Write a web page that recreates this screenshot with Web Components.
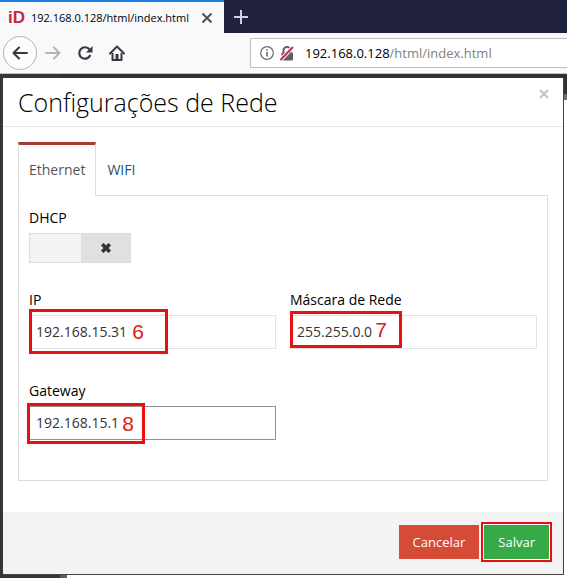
<!DOCTYPE html>
<html lang="pt-BR">
<head>
  <meta charset="utf-8">
  <meta name="viewport" content="width=device-width, initial-scale=1">
  <title>192.168.0.128/html/index.html</title>
  <style>
    body {
      margin: 0;
      min-height: 100vh;
      display: flex;
      flex-direction: column;
      background: #ffffff;
      color: #000000;
      font: 14px/20px "Open Sans", "Noto Sans", sans-serif;
    }
    app-page {
      flex: 1;
    }
  </style>
</head>
<body>
  <browser-bar></browser-bar>
  <app-page>
    <modal-dialog heading="Configurações de Rede">
      <network-form></network-form>
      <action-button slot="footer" label="Cancelar" style="--button-background: #d64a38"></action-button>
      <action-button slot="footer" label="Salvar" marked style="--button-background: #35aa47"></action-button>
    </modal-dialog>
  </app-page>

  <script>
    class BrowserBar extends HTMLElement {
      constructor() {
        super();
        this.attachShadow({ mode: 'open' });
      }

      connectedCallback() {
        this.render();
      }

      render() {
        this.shadowRoot.innerHTML = `
            <style>
              :host {
                display: block;
                background: #f9f9fb;
                border-bottom: 1px solid #c4c4c8;
                overflow: hidden;
              }
              button {
                border: 0;
                padding: 0;
                background: none;
                display: grid;
                place-items: center;
              }
              svg {
                display: block;
                flex-shrink: 0;
              }
              .tabs {
                display: flex;
                height: 33px;
                background: #20213f;
              }
              .tab {
                box-sizing: border-box;
                width: 224px;
                display: flex;
                align-items: center;
                gap: 6px;
                padding: 0 11px 0 8px;
                border-top: 2px solid #1b7fe0;
                background: #f9f9fb;
                font-size: 11px;
              }
              .tab .logo {
                color: #c22a42;
                font: 700 17px/20px "Liberation Sans", Arial, sans-serif;
              }
              .tab .title {
                flex: 1;
                white-space: nowrap;
              }
              .new {
                width: 34px;
              }
              .toolbar {
                display: flex;
                align-items: center;
                height: 40px;
                padding-left: 3px;
              }
              .nav {
                display: flex;
                align-items: center;
                width: 247px;
                gap: 8px;
              }
              .nav button {
                width: 24px;
                height: 34px;
              }
              .nav .back {
                box-sizing: border-box;
                width: 34px;
                margin-right: -4px;
                border: 1px solid #b4b4b8;
                border-radius: 50%;
                background: #fcfcfd;
              }
              .address {
                box-sizing: border-box;
                flex: 1;
                display: flex;
                align-items: center;
                gap: 6px;
                height: 30px;
                padding-left: 9px;
                border: 1px solid #bebec2;
                border-right: 0;
                border-radius: 2px 0 0 2px;
                background: #ffffff;
              }
              .url {
                margin-left: 5px;
                color: #808080;
                font-size: 13px;
              }
              .url b {
                color: #000000;
                font-weight: 400;
              }
            </style>
            <div class="tabs">
              <div class="tab">
                <span class="logo">iD</span>
                <span class="title">192.168.0.128/html/index.html</span>
                <button type="button" aria-label="Fechar aba">
                  <svg width="12" height="12" viewBox="0 0 12 12" stroke="#4b4b50" stroke-width="1.800"><path d="M1.500 1.500l9 9M10.500 1.500l-9 9"/></svg>
                </button>
              </div>
              <button class="new" type="button" aria-label="Nova aba">
                <svg width="14" height="14" viewBox="0 0 14 14" stroke="#d2d2dc" stroke-width="2"><path d="M7 0v14M0 7h14"/></svg>
              </button>
            </div>
            <div class="toolbar">
              <div class="nav">
                <button class="back" type="button" aria-label="Voltar">
                  <svg width="16" height="14" viewBox="0 0 16 14" fill="none" stroke="#38383d" stroke-width="2" stroke-linecap="round" stroke-linejoin="round"><path d="M15 7H1.500M7 1.500L1.500 7 7 12.500"/></svg>
                </button>
                <button type="button" aria-label="Avançar">
                  <svg width="16" height="14" viewBox="0 0 16 14" fill="none" stroke="#b5b5b9" stroke-width="2" stroke-linecap="round" stroke-linejoin="round"><path d="M1 7h13.500M9 1.500L14.500 7 9 12.500"/></svg>
                </button>
                <button type="button" aria-label="Recarregar">
                  <svg width="16" height="16" viewBox="0 0 16 16" fill="none" stroke="#38383d" stroke-width="2.200"><path d="M12.500 4.500A5.700 5.700 0 1 0 13.300 10"/><path d="M15.500 1v6.500H9z" fill="#38383d" stroke="none"/></svg>
                </button>
                <button type="button" aria-label="Início">
                  <svg width="16" height="16" viewBox="0 0 16 16" fill="none" stroke="#38383d" stroke-width="2" stroke-linejoin="round"><path d="M1 8.500L8 1.500l7 7" stroke-linecap="round"/><path d="M3.500 8v7h9V8"/><path d="M8 9v6" stroke-width="3"/></svg>
                </button>
              </div>
              <div class="address">
                <svg width="14" height="14" viewBox="0 0 14 14" fill="none" stroke="#6a6a6f" aria-hidden="true"><circle cx="7" cy="7" r="6.300" stroke-width="1.200"/><path d="M7 6v4.500M7 3.200v1.600" stroke-width="1.600"/></svg>
                <svg width="14" height="15" viewBox="0 0 14 15" fill="none" aria-hidden="true">
                  <path d="M3.500 7V4.500a3.500 3.500 0 0 1 7 0V7" stroke="#5f5f64" stroke-width="2"/>
                  <rect x="1.500" y="6.500" width="11.500" height="8" rx="1" fill="#5f5f64"/>
                  <path d="M.5 14L13 1" stroke="#ffffff" stroke-width="4"/>
                  <path d="M.5 14L13 1" stroke="#c72c50" stroke-width="2"/>
                </svg>
                <span class="url"><b>192.168.0.128</b>/html/index.html</span>
              </div>
            </div>
        `;
      }
    }

    // Dark top bar and sidebar of the page stay visible around the dialog
    class AppPage extends HTMLElement {
      constructor() {
        super();
        this.attachShadow({ mode: 'open' });
      }

      connectedCallback() {
        this.shadowRoot.innerHTML = `
            <style>
              :host {
                display: block;
                padding: 4px 3px 3px;
                background:
                  linear-gradient(#363435, #363435) 0 0 / 60px 100% no-repeat,
                  linear-gradient(#323033 20px, #6c6c6c 20px) 0 0 / 100% 26px no-repeat,
                  linear-gradient(#5c5c5c, #5c5c5c) 0 0 / 67px 100% no-repeat,
                  #ffffff;
              }
            </style>
            <slot></slot>
        `;
      }
    }

    class ModalDialog extends HTMLElement {
      constructor() {
        super();
        this.attachShadow({ mode: 'open' });
      }

      connectedCallback() {
        this.render();
      }

      render() {
        this.shadowRoot.innerHTML = `
            <style>
              :host {
                display: block;
                background: #ffffff;
                border: solid #444444;
                border-width: 0 1px 1px 0;
              }
              header {
                display: flex;
                justify-content: space-between;
                align-items: flex-start;
                padding: 8px 14px 8px 15px;
                border-bottom: 1px solid #e5e5e5;
              }
              h1 {
                margin: 0;
                font-size: 25px;
                line-height: 32px;
                font-weight: 300;
              }
              button {
                border: 0;
                padding: 3px 0;
                background: none;
              }
              svg {
                display: block;
              }
              .body {
                padding: 15px;
              }
              footer {
                display: flex;
                justify-content: flex-end;
                gap: 5px;
                margin-top: 16px;
                padding: 13px 14px 15px;
                background: #f3f3f3;
              }
            </style>
            <section role="dialog" aria-labelledby="heading">
              <header>
                <h1 id="heading">${this.getAttribute('heading')}</h1>
                <button type="button" aria-label="Fechar">
                  <svg width="10" height="10" viewBox="0 0 10 10" stroke="#c4c4c4" stroke-width="2"><path d="M1 1l8 8M9 1L1 9"/></svg>
                </button>
              </header>
              <div class="body"><slot></slot></div>
              <footer><slot name="footer"></slot></footer>
            </section>
        `;
      }
    }

    class NetworkForm extends HTMLElement {
      constructor() {
        super();
        this.attachShadow({ mode: 'open' });
      }

      connectedCallback() {
        this.render();
      }

      render() {
        this.shadowRoot.innerHTML = `
            <style>
              :host {
                display: block;
              }
              .tabs {
                display: flex;
              }
              .tabs button {
                margin: 0 0 -1px;
                padding: 15px 10px;
                border: 1px solid transparent;
                border-top: 3px solid transparent;
                background: none;
                color: #1a5276;
                font: inherit;
              }
              .tabs button[aria-selected="true"] {
                position: relative;
                border-color: #a33d30 #dddddd transparent;
                background: #ffffff;
                color: #555555;
              }
              .panel {
                display: grid;
                grid-template-columns: 1fr 1fr;
                column-gap: 14px;
                padding: 12px 10px 8px;
                border: 1px solid #dddddd;
              }
              toggle-field {
                grid-column: 1 / -1;
              }
            </style>
            <div class="tabs" role="tablist">
              <button type="button" role="tab" aria-selected="true">Ethernet</button>
              <button type="button" role="tab" aria-selected="false">WIFI</button>
            </div>
            <form class="panel">
              <toggle-field label="DHCP"></toggle-field>
              <text-field label="IP" value="192.168.15.31">
                <step-mark style="--top: -6px; --left: 0px; --width: 139px; --height: 45px; --inset: 21px">6</step-mark>
              </text-field>
              <text-field label="Máscara de Rede" value="255.255.0.0">
                <step-mark style="--top: -4px; --left: 0px; --width: 112px; --height: 37px; --inset: 12px">7</step-mark>
              </text-field>
              <text-field label="Gateway" value="192.168.15.1" active>
                <step-mark style="--top: -3px; --left: -2px; --width: 118px; --height: 41px">8</step-mark>
              </text-field>
            </form>
        `;
      }
    }

    class ToggleField extends HTMLElement {
      constructor() {
        super();
        this.attachShadow({ mode: 'open' });
      }

      connectedCallback() {
        this.shadowRoot.innerHTML = `
            <style>
              :host {
                display: block;
                margin-bottom: 27px;
              }
              label {
                display: block;
                width: max-content;
              }
              .switch {
                position: relative;
                box-sizing: border-box;
                display: flex;
                justify-content: flex-end;
                width: 102px;
                height: 30px;
                margin-top: 5px;
                border: 1px solid #dedede;
                background: #f3f3f3;
              }
              input {
                position: absolute;
                inset: 0;
                width: 100%;
                height: 100%;
                margin: 0;
                opacity: 0;
              }
              .knob {
                width: 49px;
                display: grid;
                place-items: center;
                background: #e0e0e0;
              }
            </style>
            <label for="toggle">${this.getAttribute('label')}</label>
            <div class="switch">
              <span class="knob">
                <svg width="10" height="10" viewBox="0 0 10 10" stroke="#333333" stroke-width="3.600"><path d="M1.200 1.200l7.600 7.600M8.800 1.200L1.200 8.800"/></svg>
              </span>
              <input id="toggle" type="checkbox" role="switch">
            </div>
        `;
      }
    }

    class TextField extends HTMLElement {
      constructor() {
        super();
        this.attachShadow({ mode: 'open' });
      }

      connectedCallback() {
        this.shadowRoot.innerHTML = `
            <style>
              :host {
                display: block;
                min-width: 0;
                margin-bottom: 32px;
              }
              label {
                display: block;
                margin-bottom: 5px;
              }
              .box {
                position: relative;
              }
              input {
                box-sizing: border-box;
                display: block;
                width: 100%;
                height: 34px;
                padding: 0 6px 2px;
                border: 1px solid #e2e2e2;
                border-radius: 0;
                outline: 0;
                background: #ffffff;
                color: #333333;
                font: inherit;
              }
              :host([active]) input {
                border-color: #929292;
              }
            </style>
            <label for="input">${this.getAttribute('label')}</label>
            <div class="box">
              <input id="input" type="text" value="${this.getAttribute('value')}">
              <slot></slot>
            </div>
        `;
      }
    }

    // Numbered red frame laid over a field
    class StepMark extends HTMLElement {
      constructor() {
        super();
        this.attachShadow({ mode: 'open' });
      }

      connectedCallback() {
        this.shadowRoot.innerHTML = `
            <style>
              :host {
                position: absolute;
                top: var(--top);
                left: var(--left);
                box-sizing: border-box;
                width: var(--width);
                height: var(--height);
                display: flex;
                align-items: center;
                justify-content: flex-end;
                padding-right: var(--inset, 8px);
                border: 3px solid #e81010;
                color: #e01818;
                font: 21px/24px "Liberation Sans", Arial, sans-serif;
                pointer-events: none;
              }
            </style>
            <slot></slot>
        `;
      }
    }

    class ActionButton extends HTMLElement {
      constructor() {
        super();
        this.attachShadow({ mode: 'open' });
      }

      connectedCallback() {
        this.shadowRoot.innerHTML = `
            <style>
              :host {
                display: block;
              }
              :host([marked]) button {
                outline: 2px solid #e81010;
                outline-offset: 1px;
                box-shadow: 0 0 0 1px #ffffff;
              }
              button {
                display: block;
                padding: 7px 14px;
                border: 0;
                background: var(--button-background, #35aa47);
                color: #ffffff;
                font: inherit;
                font-size: 13px;
              }
            </style>
            <button type="button">${this.getAttribute('label')}</button>
        `;
      }
    }

    customElements.define('browser-bar', BrowserBar);
    customElements.define('app-page', AppPage);
    customElements.define('modal-dialog', ModalDialog);
    customElements.define('toggle-field', ToggleField);
    customElements.define('text-field', TextField);
    customElements.define('step-mark', StepMark);
    customElements.define('network-form', NetworkForm);
    customElements.define('action-button', ActionButton);
  </script>
</body>
</html>
